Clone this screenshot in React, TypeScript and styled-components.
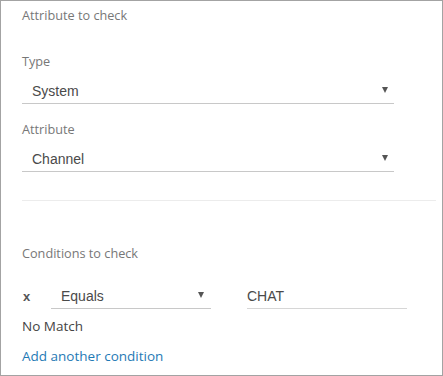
import React from 'react';
import styled, { createGlobalStyle } from 'styled-components';

const GlobalStyle = createGlobalStyle`
  html, body {
    margin: 0;
    padding: 0;
    background: #fff;
  }
  body {
    font-family: "Open Sans", "Liberation Sans", sans-serif;
  }
`;

const Panel = styled.div`
  box-sizing: border-box;
  width: 443px;
  height: 376px;
  border: 1px solid #a3a3a3;
  padding: 0 6px 0 21px;
  background: #fff;
`;

const SectionTitle = styled.div<{ $top: number }>`
  margin-top: ${(p) => p.$top}px;
  font-size: 12.7px;
  line-height: 16px;
  color: #777;
`;

const FieldLabel = styled.div<{ $top: number }>`
  margin-top: ${(p) => p.$top}px;
  font-size: 12.7px;
  line-height: 16px;
  color: #777;
`;

const Select = styled.div<{ $width: string }>`
  position: relative;
  box-sizing: border-box;
  width: ${(p) => p.$width};
  height: 35px;
  padding: 13px 0 0 10px;
  border-bottom: 1px solid #c8c8c8;
  font-family: "Liberation Sans", Arial, sans-serif;
  font-size: 14px;
  line-height: 18px;
  color: #4a4a4a;
`;

const Caret = styled.span<{ $right: number }>`
  position: absolute;
  right: ${(p) => p.$right}px;
  top: 18px;
  width: 0;
  height: 0;
  border-left: 3.5px solid transparent;
  border-right: 3.5px solid transparent;
  border-top: 6px solid #555;
`;

const Divider = styled.div`
  margin-top: 28px;
  height: 1px;
  background: #ececec;
`;

const ConditionRow = styled.div`
  display: flex;
  align-items: flex-end;
  margin-top: 13px;
`;

const RemoveX = styled.span`
  width: 28px;
  font-family: "Liberation Sans", Arial, sans-serif;
  font-weight: bold;
  font-size: 13px;
  line-height: 18px;
  padding-bottom: 3px;
  padding-left: 1px;
  color: #555;
`;

const ValueInput = styled.div`
  box-sizing: border-box;
  width: 160px;
  margin-left: 36px;
  height: 35px;
  padding-top: 13px;
  border-bottom: 1px solid #d6d6d6;
  font-family: "Liberation Sans", Arial, sans-serif;
  font-size: 14px;
  line-height: 18px;
  color: #4a4a4a;
`;

const Note = styled.div`
  margin-top: 8px;
  font-size: 13.5px;
  line-height: 18px;
  color: #444;
`;

const AddLink = styled.a`
  display: inline-block;
  margin-top: 12px;
  font-size: 13.5px;
  line-height: 18px;
  color: #1f7ab5;
  text-decoration: none;
  cursor: pointer;
`;

export default function App() {
  return (
    <>
      <GlobalStyle />
      <Panel>
        <SectionTitle $top={6}>Attribute to check</SectionTitle>
        <FieldLabel $top={30}>Type</FieldLabel>
        <Select $width="372px">
          System
          <Caret $right={6} />
        </Select>
        <FieldLabel $top={17}>Attribute</FieldLabel>
        <Select $width="372px">
          Channel
          <Caret $right={6} />
        </Select>
        <Divider />
        <SectionTitle $top={44}>Conditions to check</SectionTitle>
        <ConditionRow>
          <RemoveX>x</RemoveX>
          <Select $width="160px">
            Equals
            <Caret $right={7} />
          </Select>
          <ValueInput>CHAT</ValueInput>
        </ConditionRow>
        <Note>No Match</Note>
        <AddLink>Add another condition</AddLink>
      </Panel>
    </>
  );
}
